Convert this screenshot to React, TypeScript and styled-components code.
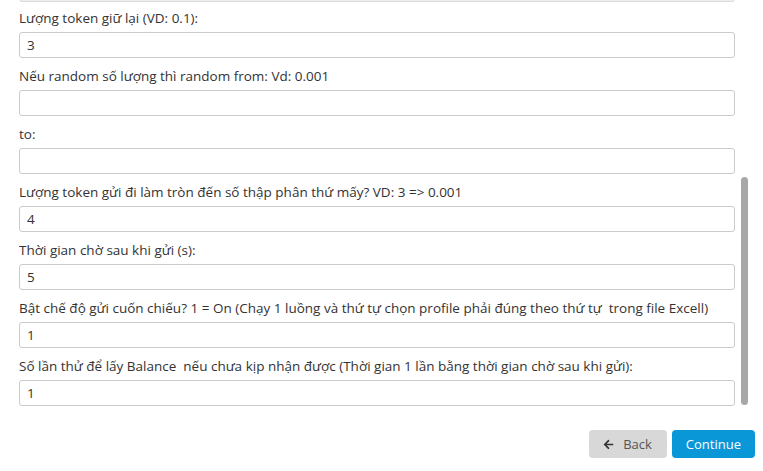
import React from "react";
import styled, { createGlobalStyle } from "styled-components";
import { FaArrowLeft } from "react-icons/fa";

const GlobalStyle = createGlobalStyle`
  html, body { margin: 0; padding: 0; background: #fff; }
  body { font-family: "Open Sans", "Noto Sans", sans-serif; }
  * { box-sizing: border-box; }
`;

const Page = styled.div`
  width: 763px;
  height: 471px;
  display: flex;
  flex-direction: column;
  background: #fff;
  overflow: hidden;
`;

const ScrollArea = styled.div`
  height: 410px;
  display: flex;
  flex-direction: row;
  padding-left: 19px;
`;

const Viewport = styled.div`
  width: 716px;
  height: 100%;
  overflow: hidden;
  display: flex;
  flex-direction: column;
  justify-content: flex-end;
  padding-bottom: 4px;
`;

const Track = styled.div`
  width: 7px;
  margin-left: 6px;
  height: 100%;
  display: flex;
  flex-direction: column;
  justify-content: flex-end;
  padding-bottom: 5px;
`;

const Thumb = styled.div`
  width: 7px;
  height: 228px;
  border-radius: 4px;
  background: #a8a8a8;
`;

const Field = styled.div<{ $gap?: number }>`
  display: flex;
  flex-direction: column;
  flex-shrink: 0;
  margin-top: ${(p) => (p.$gap ?? 9)}px;
`;

const Label = styled.label`
  font-size: 13.5px;
  line-height: 18px;
  color: #333;
  margin-bottom: 5px;
  white-space: pre;
`;

const Input = styled.input<{ $disabled?: boolean }>`
  height: 26px;
  width: 100%;
  flex-shrink: 0;
  border: 1px solid ${(p) => (p.$disabled ? "#dcdcdc" : "#cbcbcb")};
  border-radius: 3px;
  background: ${(p) => (p.$disabled ? "#eeeeee" : "#fff")};
  padding: 0 7px;
  font-family: "Open Sans", "Noto Sans", sans-serif;
  font-size: 13.5px;
  color: #333;
  outline: none;
`;

const Footer = styled.div`
  display: flex;
  justify-content: flex-end;
  gap: 5px;
  margin-top: 20px;
  padding-right: 8px;
`;

const Button = styled.button<{ $primary?: boolean }>`
  height: 28px;
  border: none;
  border-radius: 4px;
  padding: ${(p) => (p.$primary ? "0 14px" : "0 15px 0 14px")};
  display: inline-flex;
  align-items: center;
  gap: 9px;
  font-family: "Open Sans", "Noto Sans", sans-serif;
  font-size: 13px;
  color: ${(p) => (p.$primary ? "#fff" : "#555")};
  background: ${(p) => (p.$primary ? "#0a97d8" : "#d8d8d8")};
  cursor: pointer;
  svg {
    color: #333;
  }
`;

const fields: { label: string; value: string }[] = [
  { label: "Lượng token giữ lại (VD: 0.1):", value: "3" },
  { label: "Nếu random số lượng thì random from: Vd: 0.001", value: "" },
  { label: "to:", value: "" },
  { label: "Lượng token gửi đi làm tròn đến số thập phân thứ mấy? VD: 3 => 0.001", value: "4" },
  { label: "Thời gian chờ sau khi gửi (s):", value: "5" },
  {
    label:
      "Bật chế độ gửi cuốn chiếu? 1 = On (Chạy 1 luồng và thứ tự chọn profile phải đúng theo thứ tự  trong file Excell)",
    value: "1",
  },
  {
    label:
      "Số lần thử để lấy Balance  nếu chưa kịp nhận được (Thời gian 1 lần bằng thời gian chờ sau khi gửi):",
    value: "1",
  },
];

export default function App() {
  return (
    <>
      <GlobalStyle />
      <Page>
        <ScrollArea>
          <Viewport>
            <Input $disabled readOnly defaultValue="" aria-label="previous" />
            {fields.map((f, i) => (
              <Field key={i} $gap={i === 0 ? 7 : 9}>
                <Label>{f.label}</Label>
                <Input defaultValue={f.value} />
              </Field>
            ))}
          </Viewport>
          <Track>
            <Thumb />
          </Track>
        </ScrollArea>
        <Footer>
          <Button>
            <FaArrowLeft size={11} />
            Back
          </Button>
          <Button $primary>Continue</Button>
        </Footer>
      </Page>
    </>
  );
}
